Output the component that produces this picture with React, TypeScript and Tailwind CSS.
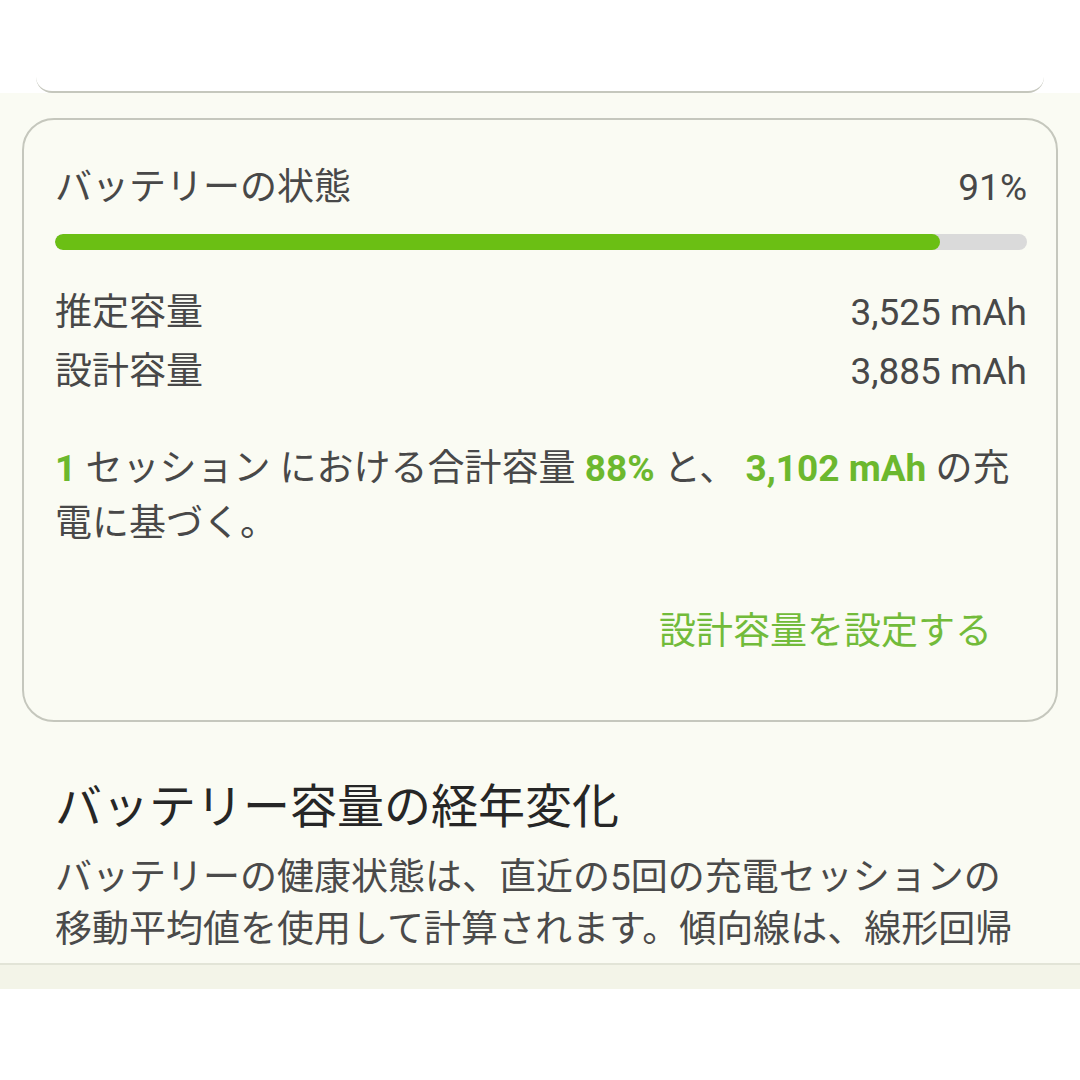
import React from 'react'

const font = { fontFamily: 'Roboto, "Noto Sans CJK JP", sans-serif' }

function Row({ label, value }: { label: string; value: string }) {
  return (
    <div className="flex h-[59px] items-center justify-between text-[37px] text-[#484848]">
      <span>{label}</span>
      <span>{value}</span>
    </div>
  )
}

export default function App() {
  const health = 91
  return (
    <div className="h-[1080px] w-[1080px] overflow-hidden bg-white" style={font}>
      <div className="h-[963px] overflow-hidden bg-[#fafbf3]">
        <div className="h-[93px] bg-white">
          <div className="mx-[36px] h-full rounded-b-[16px] border-b-2 border-[#c5c7bd]" />
        </div>

        <div className="mx-[22px] mt-[25px] rounded-[32px] border-2 border-[#c5c7bd] pb-[58px] pl-[31px] pr-[29px] pt-[44px]">
          <div className="flex h-[48px] items-center justify-between text-[37px] text-[#484848]">
            <span>バッテリーの状態</span>
            <span>{health}%</span>
          </div>
          <div className="mt-[22px] h-[16px] w-full overflow-hidden rounded-full bg-[#dadada]">
            <div className="h-full rounded-full bg-[#6bbf14]" style={{ width: `${health}%` }} />
          </div>

          <div className="mt-[33px]">
            <Row label="推定容量" value="3,525 mAh" />
            <Row label="設計容量" value="3,885 mAh" />
          </div>

          <p className="mt-[40px] whitespace-nowrap text-[37px] leading-[55px] text-[#484848]">
            <span className="font-bold text-[#6cb82e]">1</span> セッション における合計容量{' '}
            <span className="font-bold text-[#6cb82e]">88%</span> と、{' '}
            <span className="font-bold text-[#6cb82e]">3,102 mAh</span> の充
            <br />
            電に基づく。
          </p>

          <div className="mt-[51px] flex justify-end">
            <button className="h-[60px] pr-[35px] text-[37px] text-[#72bb3a]">設計容量を設定する</button>
          </div>
        </div>

        <div className="px-[55px]">
          <h2 className="mt-[55px] h-[60px] text-[47px] leading-[60px] text-[#262626]">バッテリー容量の経年変化</h2>
          <p className="mt-[15px] whitespace-nowrap text-[37px] leading-[52px] text-[#4a4a4a]">
            バッテリーの健康状態は、直近の5回の充電セッションの
            <br />
            移動平均値を使用して計算されます。傾向線は、線形回帰
          </p>
        </div>
      </div>
      <div className="h-[26px] border-t-2 border-[#e2e4d7] bg-[#f3f4e8]" />
    </div>
  )
}
